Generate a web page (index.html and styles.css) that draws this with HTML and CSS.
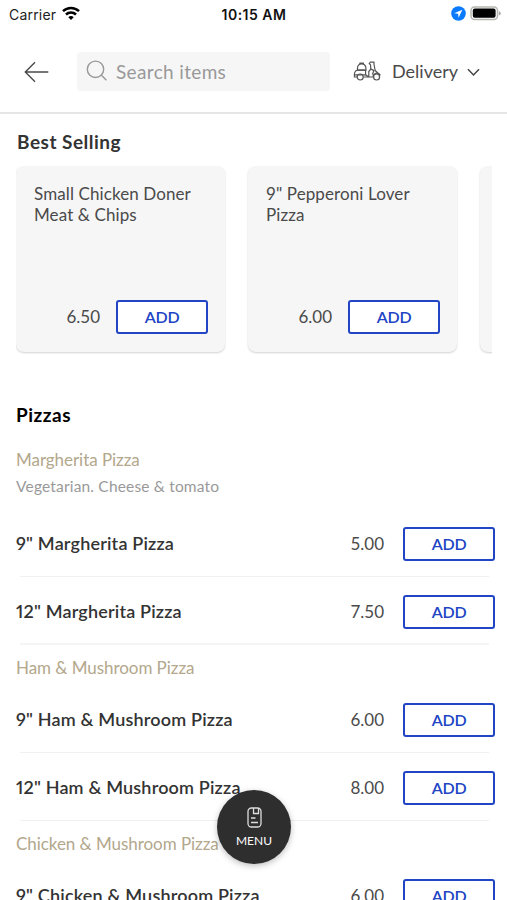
FILE: index.html
```html
<!DOCTYPE html>
<html lang="en">
<head>
  <meta charset="UTF-8">
  <meta name="viewport" content="width=device-width, initial-scale=1.0">
  <title>Menu</title>
  <link rel="stylesheet" href="styles.css">
</head>
<body>

  <div class="status-bar">
    <div class="carrier">
      <span>Carrier</span>
      <svg width="18" height="14" viewBox="0 0 18 14" fill="none" stroke="#000" stroke-width="2.5">
        <path d="M1 5.2a11.6 11.6 0 0 1 16 0"/>
        <path d="M4 8.5a7.2 7.2 0 0 1 10 0"/>
        <path d="M9 14L6.3 11.2a3.9 3.9 0 0 1 5.4 0z" fill="#000" stroke="none"/>
      </svg>
    </div>
    <div class="time">10:15 AM</div>
    <div class="status-icons">
      <svg width="15" height="15" viewBox="0 0 15 15">
        <circle cx="7.5" cy="7.5" r="7.3" fill="#0a7aff"/>
        <path d="M11.4 3.7L3.2 7.3l3.9.5.5 3.9z" fill="#fff"/>
      </svg>
      <svg width="31" height="15" viewBox="0 0 31 15">
        <rect x="1" y="1" width="26.5" height="12.5" rx="3.5" fill="#fff" stroke="#b5b5b1" stroke-width="1.5"/>
        <rect x="2.8" y="2.6" width="22.8" height="9.2" rx="2" fill="#000"/>
        <path d="M28.8 5v4.6q2-.7 2-2.3t-2-2.3z" fill="#a9a9a5"/>
      </svg>
    </div>
  </div>

  <header class="header">
    <svg class="back" width="25" height="22" viewBox="0 0 25 22" fill="none" stroke="#4a4a4a" stroke-width="1.4">
      <path d="M24.3 11H1.5M11 1.2L1.3 11l9.7 9.8"/>
    </svg>
    <div class="search">
      <svg width="22" height="22" viewBox="0 0 22 22" fill="none" stroke="#999" stroke-width="1.4">
        <circle cx="9.5" cy="9.3" r="8.2"/>
        <path d="M15.2 15.1l5.2 5.2"/>
      </svg>
      <span>Search items</span>
    </div>
    <div class="delivery">
      <svg width="28" height="21" viewBox="0 0 28 21" fill="none" stroke="#555" stroke-width="1.2" stroke-linejoin="round">
        <path d="M4.5 9.2V7a4.2 4.2 0 0 1 8.4 0v2.2zM6.8 3.4V2.2h3.6v1.2"/>
        <path d="M4.2 16H1.4C.9 12.5 1.8 9.4 4.6 9.2h8v4.6H1.7"/>
        <circle cx="7.2" cy="16" r="3"/>
        <path d="M10.2 16h10.2M12.6 13.8l3.2 2.2v-5.5l2-2.4-.3-4.4L16.200 2.600l1.200-1.500H21v2.400l1.200 6 4.600 4.500-.6 1.600"/>
        <path d="M18 8.100l3 1.500-1.700 4"/>
        <circle cx="23.600" cy="16" r="3"/>
        <path d="M19.800 15.600c.7-3.500 4.800-4.700 7.400-1.600"/>
      </svg>
      <span>Delivery</span>
      <svg class="chevron" width="13" height="9" viewBox="0 0 13 9" fill="none" stroke="#444" stroke-width="1.5">
        <path d="M1 1.2l5.5 5.8L12 1.2"/>
      </svg>
    </div>
  </header>

  <main class="content">
    <h2 class="best-title">Best Selling</h2>
    <div class="cards">
      <div class="card">
        <p>Small Chicken Doner<br>Meat &amp; Chips</p>
        <div class="buy">
          <span class="price">6.50</span>
          <button>ADD</button>
        </div>
      </div>
      <div class="card">
        <p>9" Pepperoni Lover<br>Pizza</p>
        <div class="buy">
          <span class="price">6.00</span>
          <button>ADD</button>
        </div>
      </div>
      <div class="card"></div>
    </div>

    <h2 class="section-title">Pizzas</h2>

    <h3 class="group-title first">Margherita Pizza</h3>
    <p class="description">Vegetarian. Cheese &amp; tomato</p>
    <div class="item">
      <span class="name">9" Margherita Pizza</span>
      <span class="price">5.00</span>
      <button>ADD</button>
    </div>
    <div class="item last">
      <span class="name">12" Margherita Pizza</span>
      <span class="price">7.50</span>
      <button>ADD</button>
    </div>

    <h3 class="group-title">Ham &amp; Mushroom Pizza</h3>
    <div class="item">
      <span class="name">9" Ham &amp; Mushroom Pizza</span>
      <span class="price">6.00</span>
      <button>ADD</button>
    </div>
    <div class="item">
      <span class="name">12" Ham &amp; Mushroom Pizza</span>
      <span class="price">8.00</span>
      <button>ADD</button>
    </div>

    <h3 class="group-title">Chicken &amp; Mushroom Pizza</h3>
    <div class="item">
      <span class="name">9" Chicken &amp; Mushroom Pizza</span>
      <span class="price">6.00</span>
      <button>ADD</button>
    </div>
  </main>

  <div class="menu-btn">
    <svg width="15" height="21" viewBox="0 0 15 21" fill="none" stroke="#ddd" stroke-width="1.3">
      <rect x="1" y="1" width="13" height="19" rx="3.5"/>
      <path d="M6.500 1v5.500h5V1M4 11h4.500M4 15.500h7"/>
    </svg>
    <span>MENU</span>
  </div>

</body>
</html>
```
FILE: styles.css
```css
* {
  box-sizing: border-box;
}

body {
  margin: 0;
  height: 900px;
  overflow: hidden;
  background-color: #fff;
  font-family: Lato, 'Liberation Sans', sans-serif;
  color: #4a4a4a;
}

h2, h3, p {
  margin: 0;
}

svg {
  display: block;
  flex-shrink: 0;
}

/* Status bar */
.status-bar {
  display: grid;
  grid-template-columns: 1fr auto 1fr;
  align-items: center;
  height: 28px;
  padding: 0 6px 0 9px;
  font-family: Inter, sans-serif;
  font-size: 14px;
  color: #222;
}

.carrier {
  display: flex;
  align-items: center;
  gap: 6px;
  letter-spacing: 0.2px;
}

.carrier svg {
  margin-top: -3px;
}

.time {
  margin-left: -2px;
  font-weight: 600;
  letter-spacing: 0.5px;
  color: #111;
}

.status-icons {
  display: flex;
  justify-content: flex-end;
  align-items: center;
  gap: 4px;
  margin-top: -2px;
}

/* Header */
.header {
  display: flex;
  align-items: center;
  height: 86px;
  padding: 2px 0 0 24px;
  border-bottom: 2px solid #e6e6e6;
}

.back {
  margin-top: 1px;
}

.search {
  display: flex;
  align-items: center;
  width: 253px;
  height: 39px;
  margin-left: 28px;
  padding-left: 9px;
  gap: 8px;
  border-radius: 4px;
  background-color: #f6f6f6;
  font-size: 19px;
  letter-spacing: 0.35px;
  color: #999;
}

.delivery {
  display: flex;
  align-items: center;
  margin-left: 23px;
  font-size: 18px;
}

.delivery span {
  margin-left: 11px;
}

.chevron {
  margin: 3px 0 0 9px;
}

/* Best selling */
.content {
  padding: 0 15px 0 16px;
}

.best-title {
  padding: 16px 0 0 1px;
  font-size: 19px;
  line-height: 24px;
  letter-spacing: 0.5px;
  color: #333;
}

.cards {
  display: flex;
  gap: 23px;
  height: 190px;
  margin-top: 12px;
  padding-bottom: 4px;
  overflow: hidden;
}

.card {
  display: flex;
  flex-direction: column;
  justify-content: space-between;
  flex: 0 0 209px;
  padding: 17px 17px 18px 18px;
  border-radius: 8px;
  background-color: #f6f6f6;
  box-shadow: 0 1px 2px rgba(0, 0, 0, 0.18);
}

.card p {
  font-size: 17px;
  line-height: 21px;
  letter-spacing: 0.1px;
}

.buy {
  display: flex;
  justify-content: flex-end;
  align-items: center;
}

.price {
  margin-top: -2px;
  font-size: 17px;
}

button {
  width: 92px;
  height: 34px;
  margin-left: 16px;
  padding: 0 0 1px;
  border: 2px solid #2145c4;
  border-radius: 3px;
  background-color: #fff;
  font-family: inherit;
  font-size: 16px;
  font-weight: 600;
  letter-spacing: -0.2px;
  color: #2145c4;
}

/* Item list */
.section-title {
  padding-top: 47px;
  font-size: 19px;
  line-height: 24px;
  letter-spacing: 0.5px;
  color: #000;
}

.group-title {
  height: 40px;
  font-size: 17px;
  font-weight: 400;
  line-height: 45px;
  letter-spacing: -0.05px;
  color: #b3a78c;
}

.group-title.first {
  height: 27px;
  margin-top: 22px;
  line-height: 22px;
}

.description {
  height: 33px;
  font-size: 15.5px;
  line-height: 20px;
  letter-spacing: 0.18px;
  color: #999;
}

.item {
  display: flex;
  align-items: center;
  height: 68px;
  margin-right: -3px;
  padding: 2px 0 0;
  background: linear-gradient(#f0f0f0, #f0f0f0) 4px 100% / calc(100% - 10px) 1px no-repeat;
}

.item.last {
  background-image: linear-gradient(#f5f5f5, #f5f5f5);
  background-size: calc(100% - 10px) 2px;
}

.name {
  flex: 1;
  margin-top: -2px;
  font-size: 18px;
  font-weight: 600;
  font-variant-numeric: proportional-nums;
  letter-spacing: 0.18px;
  color: #333;
}

.item .price {
  margin-top: -1px;
}

.item button {
  margin-left: 19px;
}

/* Floating menu button */
.menu-btn {
  position: absolute;
  left: 217px;
  top: 790px;
  display: flex;
  flex-direction: column;
  align-items: center;
  width: 74px;
  height: 74px;
  padding-top: 17px;
  border-radius: 50%;
  background-color: #2e2e2e;
  box-shadow: 0 2px 6px rgba(0, 0, 0, 0.25);
  font-size: 12px;
  color: #fff;
}

.menu-btn span {
  margin-top: 5px;
}
```
